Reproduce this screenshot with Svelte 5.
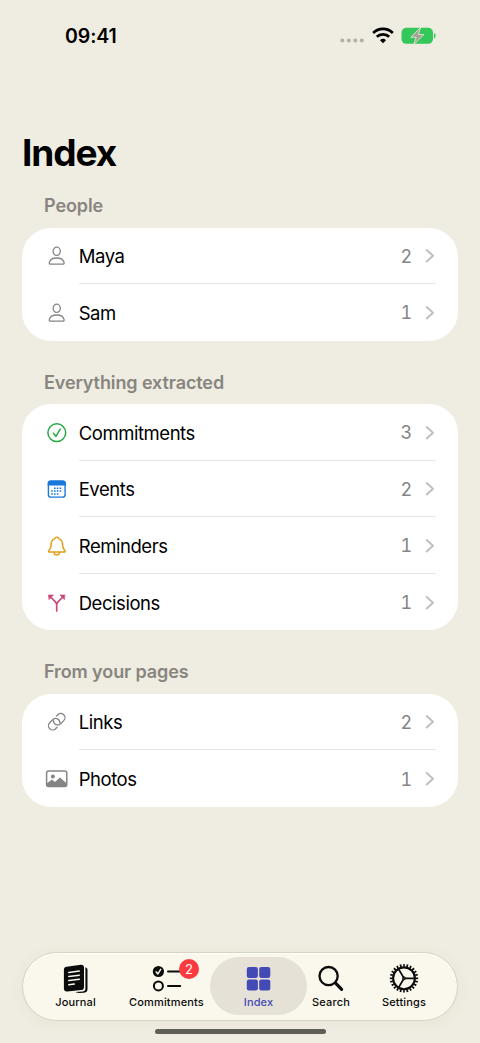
<script lang="ts">
  type Row = { icon: string; label: string; count: number };
  type Section = { title: string; rows: Row[] };

  const sections: Section[] = [
    {
      title: 'People',
      rows: [
        { icon: 'person', label: 'Maya', count: 2 },
        { icon: 'person', label: 'Sam', count: 1 },
      ],
    },
    {
      title: 'Everything extracted',
      rows: [
        { icon: 'check', label: 'Commitments', count: 3 },
        { icon: 'calendar', label: 'Events', count: 2 },
        { icon: 'bell', label: 'Reminders', count: 1 },
        { icon: 'branch', label: 'Decisions', count: 1 },
      ],
    },
    {
      title: 'From your pages',
      rows: [
        { icon: 'link', label: 'Links', count: 2 },
        { icon: 'photo', label: 'Photos', count: 1 },
      ],
    },
  ];

  const tabs = [
    { id: 'journal', label: 'Journal' },
    { id: 'commitments', label: 'Commitments', badge: 2 },
    { id: 'index', label: 'Index' },
    { id: 'search', label: 'Search' },
    { id: 'settings', label: 'Settings' },
  ];

  let active = $state('index');
</script>

{#snippet rowIcon(name: string)}
  <svg class="row-icon {name}" width="24" height="24" viewBox="0 0 24 24" fill="none" stroke="currentColor" stroke-width="1.3" stroke-linecap="round" stroke-linejoin="round">
    {#if name === 'person'}
      <ellipse cx="11.7" cy="7.3" rx="3.6" ry="4.1" />
      <path d="M5.6 20.1h12.2c1 0 1.500-.5 1.300-1.400-.6-2.600-3.600-4.700-7.400-4.700s-6.800 2.100-7.400 4.700c-.2.9.3 1.400 1.300 1.400z" />
    {:else if name === 'check'}
      <circle cx="11.8" cy="11.7" r="8.9" stroke-width="1.5" />
      <path d="M8.4 12.2l2.500 3.100 4.300-7.200" stroke-width="1.5" />
    {:else if name === 'calendar'}
      <rect x="3.4" y="4.2" width="16.7" height="15.9" rx="2.4" stroke-width="1.4" />
      <path d="M2.7 8.6V6.200a2.700 2.700 0 0 1 2.700-2.700h12.700a2.700 2.700 0 0 1 2.700 2.700v2.400z" fill="currentColor" stroke="none" />
      <g stroke-width="1.5" stroke-linecap="butt">
        <path d="M9 11.300h8.500M6.200 14.100h11.300M6.200 16.900h8.500" stroke-dasharray="1.600 1.200" />
      </g>
    {:else if name === 'bell'}
      <path d="M4.500 18.100h14.600c1 0 1.200-.8.700-1.500-1.100-1.500-2.100-2.300-2.200-5.200-.1-3.500-1-5.800-3.600-6.500-.3-1-1.100-1.700-2.200-1.700s-1.900.7-2.200 1.700c-2.600.7-3.500 3-3.600 6.500-.1 2.900-1.100 3.700-2.200 5.200-.5.7-.3 1.500.7 1.500z" stroke-width="1.500" />
      <path d="M9.100 18.500c.2 1.700 1.200 2.600 2.700 2.600s2.500-.9 2.700-2.600" stroke-width="1.500" />
    {:else if name === 'branch'}
      <path d="M11.700 20v-6.200c0-1.400-.4-2.100-1.300-3L6.100 6.500M11.700 13.800c0-1.400.4-2.100 1.300-3l4.300-4.300" stroke-width="1.700" />
      <path d="M3.800 4.100h4.500l-4 4.200zM19.600 4.100h-4.500l4 4.200z" fill="currentColor" stroke-width=".8" />
    {:else if name === 'link'}
      <g transform="rotate(-45 11.700 11.700)">
        <path d="M8 15.900h-2a4.200 4.200 0 0 1 0-8.400h4.300a4.200 4.200 0 0 1 2.900 7.200" />
        <path d="M15.400 7.500h2a4.200 4.200 0 0 1 0 8.400h-4.300a4.200 4.200 0 0 1-2.900-7.200" />
      </g>
    {:else if name === 'photo'}
      <rect x="1.600" y="4" width="20.200" height="15.600" rx="2" stroke-width="1.500" />
      <circle cx="7.900" cy="9.500" r="2" fill="currentColor" stroke="none" />
      <path d="M1.700 16.500l5.200-4 3 2.400 5-4.500 7 6v1.600a1.700 1.700 0 0 1-1.700 1.700H3.400A1.700 1.700 0 0 1 1.700 18z" fill="currentColor" stroke="none" />
    {/if}
  </svg>
{/snippet}

{#snippet tabIcon(name: string)}
  <svg width="32" height="30" viewBox="0 0 32 30" fill="none" stroke="currentColor" stroke-linecap="round" stroke-linejoin="round">
    {#if name === 'journal'}
      <path d="M25.400 3.200c1.500.4 2.100 1.400 2.100 2.900v19c0 2.300-1.200 3.500-3.400 3.600l-5.400.3c-1.300 0-2.300-.2-3-.9l7.300-.7c1.700-.2 2.400-1.200 2.400-2.900z" fill="currentColor" stroke="none" />
      <path d="M6.600 2.700l14.300-1.900c1.900-.2 3.100.8 3.100 2.700v19.400c0 2-1 3-2.900 3.200L7.400 27.400c-2.200.2-3.500-.8-3.500-3V5.700c0-1.800.9-2.800 2.700-3z" fill="currentColor" stroke="none" />
      <g class="cutout" stroke-width="1.500">
        <path d="M8.800 8.400l10.500-1.300M8.800 12.500l10.500-1.300M8.800 16.600l10.500-1.300M8.800 20.700l5.500-.7" />
      </g>
    {:else if name === 'commitments'}
      <circle cx="7.400" cy="7.500" r="5.600" fill="currentColor" stroke="none" />
      <path class="cutout" d="M5.200 7.900l1.700 2 2.800-4.500" stroke-width="1.500" />
      <circle cx="7.400" cy="21.900" r="4.500" stroke-width="2" />
      <path d="M17 7.500h12.200M17 21.900h12.200" stroke-width="2" />
    {:else if name === 'index'}
      <g fill="currentColor" stroke="none">
        <rect x="3.800" y="2.900" width="11.100" height="11" rx="2.200" />
        <rect x="16.200" y="2.900" width="11.100" height="11" rx="2.200" />
        <rect x="3.800" y="15.400" width="11.100" height="11" rx="2.200" />
        <rect x="16.200" y="15.400" width="11.100" height="11" rx="2.200" />
      </g>
    {:else if name === 'search'}
      <circle cx="13.600" cy="12.100" r="9.100" stroke-width="2.300" />
      <path d="M20.600 19.200l6 6.100" stroke-width="3.200" />
    {:else if name === 'settings'}
      <circle cx="16" cy="14.300" r="12.900" stroke-width="2.600" stroke-linecap="butt" pathLength="72" stroke-dasharray="1.500 1.500" stroke-dashoffset=".75" />
      <circle cx="16" cy="14.300" r="10.900" stroke-width="2.100" />
      <path d="M17 14.300h9.600M15.500 13.400l-5.100-8.700M15.500 15.200l-5.100 8.700" stroke-width="1.700" />
      <circle cx="16" cy="14.300" r="1.500" stroke-width="1" />
    {/if}
  </svg>
{/snippet}

<div class="screen">
  <header class="status">
    <span class="time">09:41</span>
    <div class="indicators">
      <svg class="signal" width="24" height="5" viewBox="0 0 24 5" fill="#b3b0a7">
        <circle cx="2.300" cy="2.500" r="2" />
        <circle cx="8.800" cy="2.500" r="2" />
        <circle cx="15.300" cy="2.500" r="2" />
        <circle cx="21.800" cy="2.500" r="2" />
      </svg>
      <svg class="wifi" width="22" height="17" viewBox="0 0 22 17" fill="none" stroke="#000" stroke-width="2.800">
        <path d="M1.200 5.900a14 14 0 0 1 19.600 0" />
        <path d="M4.800 9.800a8.900 8.900 0 0 1 12.400 0" />
        <path d="M11 16.300l-3-3a4.300 4.300 0 0 1 6 0z" fill="#000" stroke="none" />
      </svg>
      <svg class="battery" width="36" height="18" viewBox="0 0 36 18">
        <rect x=".5" y=".8" width="31.500" height="16" rx="4.800" fill="#34c759" />
        <path d="M33 6.100c1 .4 1.600 1.400 1.600 2.700s-.6 2.300-1.600 2.700z" fill="#34c759" />
        <path d="M19.700.2L9.900 10.300h5.300l-2.600 7.500L22.900 7.500h-5.500z" fill="#a6a197" stroke="#efece1" stroke-width=".8" stroke-linejoin="round" />
      </svg>
    </div>
  </header>

  <main>
    <h1>Index</h1>
    {#each sections as section}
      <section>
        <h2>{section.title}</h2>
        <ul class="card">
          {#each section.rows as row}
            <li>
              {@render rowIcon(row.icon)}
              <div class="row-body">
                <span class="label">{row.label}</span>
                <span class="count">{row.count}</span>
                <svg class="chevron" width="10" height="16" viewBox="0 0 10 16" fill="none" stroke="#bfbfc1" stroke-width="2" stroke-linecap="round" stroke-linejoin="round">
                  <path d="M1.700 2.100l6.300 5.700-6.300 5.700" />
                </svg>
              </div>
            </li>
          {/each}
        </ul>
      </section>
    {/each}
  </main>

  <footer>
    <nav>
      {#each tabs as tab}
        <button class="tab {tab.id}" class:active={active === tab.id} onclick={() => (active = tab.id)}>
          {@render tabIcon(tab.id)}
          <span class="tab-label">{tab.label}</span>
          {#if tab.badge}
            <span class="badge">{tab.badge}</span>
          {/if}
        </button>
      {/each}
    </nav>
    <div class="home"></div>
  </footer>
</div>

<style>
  :global(body) {
    background: #efece1;
  }

  .screen {
    display: flex;
    flex-direction: column;
    box-sizing: border-box;
    width: 480px;
    height: 1043px;
    overflow: hidden;
    background: #efece1;
    color: #000;
    font-family: Inter, 'Liberation Sans', sans-serif;
  }

  .status {
    display: flex;
    align-items: center;
    justify-content: space-between;
    height: 71px;
    padding: 0 43px 0 65px;
  }

  .time {
    font-size: 19.5px;
    font-weight: 600;
    letter-spacing: -0.1px;
  }

  .indicators {
    display: flex;
    align-items: center;
  }

  .signal {
    margin: 10px 8px 0 0;
  }

  .wifi {
    margin-right: 7px;
  }

  main {
    flex: 1;
    padding: 58px 22px 0;
  }

  h1 {
    margin: 0;
    height: 47px;
    font-size: 37px;
    font-weight: 700;
    line-height: 47px;
    letter-spacing: -1.1px;
  }

  section {
    margin-bottom: 22px;
  }

  h2 {
    box-sizing: border-box;
    height: 41.3px;
    margin: 0;
    padding: 8px 22px 0;
    color: #87857f;
    font-size: 18px;
    font-weight: 600;
    line-height: 24px;
    letter-spacing: -0.1px;
  }

  h1 + section h2 {
    height: 51.5px;
    padding-top: 18px;
  }

  .card {
    margin: 0;
    padding: 0 22px;
    border-radius: 29px;
    background: #fff;
    list-style: none;
  }

  li {
    display: flex;
    align-items: center;
    height: 56.6px;
  }

  .row-icon {
    flex: none;
    margin: 1px 11px 0 1px;
    color: #858585;
  }

  .check {
    color: #28a745;
  }

  .calendar {
    color: #1878dc;
  }

  .bell {
    color: #dfa017;
  }

  .branch {
    color: #c94878;
  }

  .row-body {
    display: flex;
    flex: 1;
    align-items: center;
    box-sizing: border-box;
    height: 100%;
    margin-left: -1.3px;
    padding: 2px 1px 0 0;
    border-bottom: 1px solid #e6e6e6;
  }

  li:last-child .row-body {
    border-bottom-color: transparent;
  }

  .label {
    flex: 1;
    font-size: 18.5px;
    letter-spacing: -0.45px;
  }

  .count {
    margin-right: 13px;
    color: #858585;
    font-size: 18px;
    font-variant-numeric: tabular-nums;
    letter-spacing: -0.2px;
  }

  footer {
    display: flex;
    flex-direction: column;
    align-items: center;
    height: 91px;
  }

  nav {
    display: flex;
    align-items: center;
    box-sizing: border-box;
    width: 436px;
    height: 69px;
    padding-left: 8px;
    border: 1px solid #d5d2c8;
    border-radius: 35px;
    background: #faf7ed;
    box-shadow: 0 2px 16px rgba(90, 85, 60, 0.05), inset 0 1px 1px #fffef8;
  }

  .tab {
    position: relative;
    display: flex;
    flex: none;
    flex-direction: column;
    align-items: center;
    box-sizing: border-box;
    width: 89px;
    height: 58px;
    margin-bottom: 1px;
    padding: 7px 0 0;
    border: 0;
    border-radius: 29px;
    background: none;
    color: #0b0b0b;
    font-family: inherit;
  }

  .tab.commitments {
    width: 93px;
  }

  .tab.index {
    width: 97px;
    margin-left: -3px;
  }

  .tab.search {
    width: 48px;
  }

  .tab.settings {
    width: 98px;
  }

  .tab.active {
    background: #e5e1d6;
    color: #444ab5;
  }

  .cutout {
    stroke: #faf7ed;
  }

  .tab-label {
    margin-top: 1px;
    font-size: 11px;
    font-weight: 500;
    line-height: 15px;
    letter-spacing: 0.15px;
    white-space: nowrap;
  }

  .badge {
    position: absolute;
    top: 2px;
    left: 59px;
    width: 20px;
    height: 20px;
    border-radius: 50%;
    background: #fb3a40;
    color: #fff;
    font-size: 13px;
    line-height: 20px;
    text-align: center;
  }

  .home {
    width: 171px;
    height: 5.5px;
    margin-top: 7.5px;
    border-radius: 3px;
    background: #5f5e59;
  }
</style>
